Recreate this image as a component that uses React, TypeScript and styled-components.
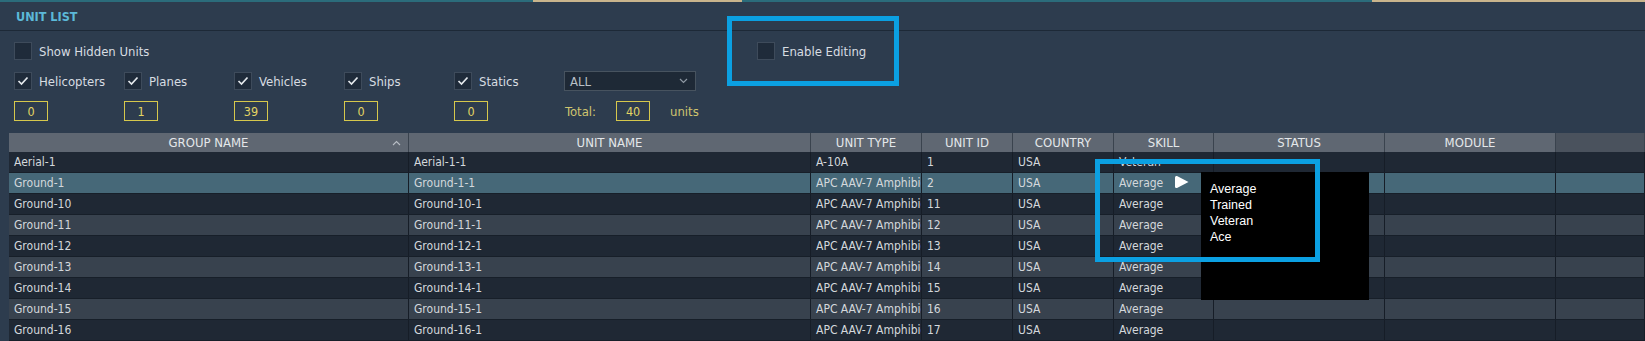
import React from "react";
import styled, { createGlobalStyle } from "styled-components";

const UI_FONT = `"DejaVu Sans Condensed", "DejaVu Sans", "Liberation Sans", sans-serif`;

const GlobalStyle = createGlobalStyle`
  html, body { margin: 0; padding: 0; background: #2d3c4e; overflow: hidden; }
  body { font-family: ${UI_FONT}; font-stretch: condensed; }
`;

const Panel = styled.div`
  position: relative;
  width: 1645px;
  height: 341px;
  overflow: hidden;
  background: #2d3c4e;
  font-family: ${UI_FONT};
  font-stretch: condensed;
  color: #d6dbe0;
`;

const MapStrip = styled.div`
  height: 2px;
  background: linear-gradient(
    to right,
    #2b6c7b 0 533px,
    #c9b48c 533px 742px,
    #2b6c7b 742px 1372px,
    #c9b48c 1372px 100%
  );
`;

const TitleBar = styled.div`
  height: 28px;
  display: flex;
  align-items: center;
  padding-left: 16px;
  border-bottom: 1px solid #1d2937;
  font-weight: bold;
  font-size: 12.5px;
  color: #5cb9d9;
`;

const Controls = styled.div`
  padding: 11px 0 0 14px;
`;

const TopRow = styled.div`
  display: flex;
  align-items: center;
  height: 18px;
`;

const Toggle = styled.label<{ $width?: number }>`
  display: flex;
  align-items: center;
  width: ${(p) => (p.$width ? `${p.$width}px` : "auto")};
  font-size: 13px;
  color: #d8dde2;
  white-space: nowrap;
`;

const Box = styled.span`
  width: 18px;
  height: 18px;
  box-sizing: border-box;
  background: #1f2b3a;
  border: 1px solid #3e4b5b;
  display: flex;
  align-items: center;
  justify-content: center;
  flex: none;
`;

const LabelText = styled.span`
  margin-left: 7px;
`;

const FilterGrid = styled.div`
  margin-top: 11px;
  display: grid;
  grid-template-columns: repeat(5, 110px) auto;
  grid-auto-rows: 20px;
  row-gap: 10px;
  align-items: center;
`;

const Dropdown = styled.div`
  width: 132px;
  height: 20px;
  box-sizing: border-box;
  background: #1e2936;
  border: 1px solid #47535f;
  padding: 0 7px 0 5px;
  display: flex;
  align-items: center;
  justify-content: space-between;
  font-size: 13px;
  color: #b9c0c8;
`;

const CountBox = styled.div`
  width: 34px;
  height: 20px;
  box-sizing: border-box;
  border: 1px solid #d6c84c;
  color: #e3d463;
  font-size: 12.5px;
  display: flex;
  align-items: center;
  justify-content: center;
`;

const TotalGroup = styled.div`
  display: flex;
  align-items: center;
  gap: 20px;
  padding-left: 1px;
`;

const TotalText = styled.span`
  font-size: 13px;
  color: #cfc46e;
`;

const COLS = "400px 402px 111px 91px 101px 100px 171px 171px 1fr";

const Table = styled.div`
  margin: 12px 0 0 9px;
`;

const HeaderRow = styled.div`
  display: grid;
  grid-template-columns: ${COLS};
  height: 19px;
`;

const HeaderCell = styled.div<{ $filler?: boolean }>`
  position: relative;
  background: ${(p) => (p.$filler ? "#4a525d" : "#5f6772")};
  border-right: 1px solid #3a434e;
  display: flex;
  align-items: center;
  justify-content: center;
  font-size: 13px;
  color: #e4e7ea;
  white-space: nowrap;
  overflow: hidden;
`;

const SortMark = styled.svg`
  position: absolute;
  right: 7px;
  top: 7px;
`;

type Tone = "dark" | "light" | "selected";

const rowBg: Record<Tone, string> = {
  dark: "#1f2834",
  light: "#38424e",
  selected: "#466878",
};

const Row = styled.div<{ $tone: Tone }>`
  display: grid;
  grid-template-columns: ${COLS};
  height: 20px;
  border-bottom: 1px solid #171f29;
  background: ${(p) => rowBg[p.$tone]};
`;

const Cell = styled.div`
  padding-left: 5px;
  font-size: 12px;
  line-height: 20px;
  color: #d4d8dc;
  white-space: nowrap;
  overflow: hidden;
  border-right: 1px solid #161d27;
`;

const Highlight = styled.div<{ $x: number; $y: number; $w: number; $h: number }>`
  position: absolute;
  left: ${(p) => p.$x}px;
  top: ${(p) => p.$y}px;
  width: ${(p) => p.$w}px;
  height: ${(p) => p.$h}px;
  box-sizing: border-box;
  border: 5px solid #0ba0e2;
  pointer-events: none;
`;

const SkillMenu = styled.ul`
  position: absolute;
  left: 1201px;
  top: 172px;
  width: 168px;
  height: 128px;
  box-sizing: border-box;
  margin: 0;
  padding: 9px 0 0 9px;
  list-style: none;
  background: #000;
  font-family: "Liberation Sans", Arial, sans-serif;
  font-stretch: normal;
  font-size: 12.5px;
  line-height: 16px;
  color: #fff;
`;

const Pointer = styled.svg`
  position: absolute;
  left: 1174px;
  top: 175px;
`;

const Check = () => (
  <svg width="12" height="10" viewBox="0 0 12 10">
    <polyline points="1.5,5 4.5,8 10.5,1.5" fill="none" stroke="#e4e8ec" strokeWidth="1.7" />
  </svg>
);

const CheckBox = ({ checked }: { checked?: boolean }) => <Box>{checked && <Check />}</Box>;

const filters = [
  { label: "Helicopters", count: 0 },
  { label: "Planes", count: 1 },
  { label: "Vehicles", count: 39 },
  { label: "Ships", count: 0 },
  { label: "Statics", count: 0 },
];

const headers = ["GROUP NAME", "UNIT NAME", "UNIT TYPE", "UNIT ID", "COUNTRY", "SKILL", "STATUS", "MODULE"];

const rows = [
  { g: "Aerial-1", u: "Aerial-1-1", t: "A-10A", id: 1, s: "Veteran" },
  { g: "Ground-1", u: "Ground-1-1", t: "APC AAV-7 Amphibious", id: 2, s: "Average" },
  { g: "Ground-10", u: "Ground-10-1", t: "APC AAV-7 Amphibious", id: 11, s: "Average" },
  { g: "Ground-11", u: "Ground-11-1", t: "APC AAV-7 Amphibious", id: 12, s: "Average" },
  { g: "Ground-12", u: "Ground-12-1", t: "APC AAV-7 Amphibious", id: 13, s: "Average" },
  { g: "Ground-13", u: "Ground-13-1", t: "APC AAV-7 Amphibious", id: 14, s: "Average" },
  { g: "Ground-14", u: "Ground-14-1", t: "APC AAV-7 Amphibious", id: 15, s: "Average" },
  { g: "Ground-15", u: "Ground-15-1", t: "APC AAV-7 Amphibious", id: 16, s: "Average" },
  { g: "Ground-16", u: "Ground-16-1", t: "APC AAV-7 Amphibious", id: 17, s: "Average" },
];

export default function App() {
  return (
    <>
      <GlobalStyle />
      <Panel>
        <MapStrip />
        <TitleBar>UNIT LIST</TitleBar>
        <Controls>
          <TopRow>
            <Toggle $width={743}>
              <CheckBox />
              <LabelText>Show Hidden Units</LabelText>
            </Toggle>
            <Toggle>
              <CheckBox />
              <LabelText>Enable Editing</LabelText>
            </Toggle>
          </TopRow>
          <FilterGrid>
            {filters.map((f) => (
              <Toggle key={f.label}>
                <CheckBox checked />
                <LabelText>{f.label}</LabelText>
              </Toggle>
            ))}
            <Dropdown>
              <span>ALL</span>
              <svg width="9" height="6" viewBox="0 0 9 6">
                <polyline points="1,1 4.5,4.5 8,1" fill="none" stroke="#8e98a3" strokeWidth="1.2" />
              </svg>
            </Dropdown>
            {filters.map((f) => (
              <CountBox key={f.label}>{f.count}</CountBox>
            ))}
            <TotalGroup>
              <TotalText>Total:</TotalText>
              <CountBox>40</CountBox>
              <TotalText>units</TotalText>
            </TotalGroup>
          </FilterGrid>
        </Controls>
        <Table>
          <HeaderRow>
            {headers.map((h, i) => (
              <HeaderCell key={h}>
                {h}
                {i === 0 && (
                  <SortMark width="9" height="6" viewBox="0 0 9 6">
                    <polyline points="1,5 4.5,1.5 8,5" fill="none" stroke="#b8bec5" strokeWidth="1.1" />
                  </SortMark>
                )}
              </HeaderCell>
            ))}
            <HeaderCell $filler />
          </HeaderRow>
          {rows.map((r, i) => (
            <Row key={r.g} $tone={i === 1 ? "selected" : i % 2 === 0 ? "dark" : "light"}>
              <Cell>{r.g}</Cell>
              <Cell>{r.u}</Cell>
              <Cell>{r.t}</Cell>
              <Cell>{r.id}</Cell>
              <Cell>USA</Cell>
              <Cell>{r.s}</Cell>
              <Cell />
              <Cell />
              <Cell />
            </Row>
          ))}
        </Table>

        <SkillMenu>
          <li>Average</li>
          <li>Trained</li>
          <li>Veteran</li>
          <li>Ace</li>
        </SkillMenu>
        <Pointer width="15" height="14" viewBox="0 0 15 14">
          <path d="M1 2.5 Q1 0.5 3 1 L14.5 7 L3 13 Q1 13.5 1 11.5 Z" fill="#fff" />
        </Pointer>
        <Highlight $x={727} $y={16} $w={172} $h={70} />
        <Highlight $x={1095} $y={159} $w={225} $h={103} />
      </Panel>
    </>
  );
}
